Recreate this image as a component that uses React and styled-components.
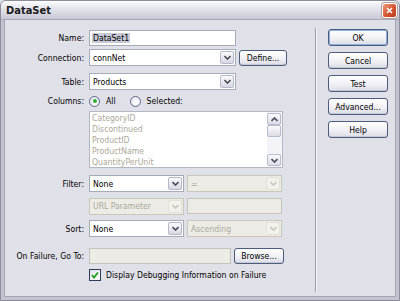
import React from 'react';
import styled, { createGlobalStyle, css } from 'styled-components';

const GlobalStyle = createGlobalStyle`
    html, body {
        margin: 0;
        padding: 0;
        background: #e0e0e8;
    }
    body {
        font-family: "DejaVu Sans Condensed", "Liberation Sans", sans-serif;
        font-size: 8.6px;
        color: #000;
    }
`;

const Window = styled.div`
    width: 400px;
    height: 301px;
    box-sizing: border-box;
    display: flex;
    flex-direction: column;
    background: #c4c4d0;
    border: 1px solid #8c8c9c;
    border-radius: 6px 6px 0 0;
    overflow: hidden;
`;

const TitleBar = styled.div`
    height: 18px;
    flex: none;
    display: flex;
    align-items: center;
    justify-content: space-between;
    padding: 0 2px 0 5px;
    background: linear-gradient(#ffffff, #ececf2 25%, #dcdce6 60%, #c8c8d4);
    border-bottom: 1px solid #a8a8b8;
`;

const Title = styled.span`
    font-family: "DejaVu Sans Condensed", "Liberation Sans", sans-serif;
    font-weight: bold;
    font-size: 11px;
    color: #1a1a1a;
`;

const CloseBox = styled.div`
    width: 13px;
    height: 13px;
    border-radius: 3px;
    border: 1px solid #fff;
    box-shadow: 0 0 0 1px #b0a0a0;
    background: linear-gradient(135deg, #f09a7c, #d4552f 55%, #b83a18);
    display: flex;
    align-items: center;
    justify-content: center;
`;

const Frame = styled.div`
    flex: 1;
    display: flex;
    padding: 0 3px 3px 3px;
`;

const Client = styled.div`
    flex: 1;
    display: flex;
    background: #e0e0e8;
    border: 1px solid #a4a4b4;
    border-top: none;
`;

const Form = styled.div`
    width: 310px;
    padding-top: 10px;
    display: flex;
    flex-direction: column;
`;

const Row = styled.div`
    display: flex;
    align-items: center;
    height: ${p => p.$h || 16}px;
    margin-top: ${p => p.$top || 0}px;
    ${p => p.$start && css`align-items: flex-start;`}
`;

const Label = styled.label`
    width: 79px;
    padding-right: 5px;
    text-align: right;
    white-space: nowrap;
    flex: none;
`;

const Controls = styled.div`
    display: flex;
    align-items: center;
    gap: 3px;
`;

const TextBox = styled.div`
    box-sizing: border-box;
    width: ${p => p.$w}px;
    height: 16px;
    display: flex;
    align-items: center;
    padding: 0 3px;
    background: ${p => (p.$disabled ? '#ecebe6' : '#fff')};
    border: 1px solid ${p => (p.$disabled ? '#c4c3ba' : '#a4acb8')};
    color: ${p => (p.$disabled ? '#aca899' : '#000')};
`;

const Selected = styled.span`
    background: #c8cad8;
    padding: 0 1px;
    margin-left: -1px;
`;

const Combo = styled.div`
    box-sizing: border-box;
    width: ${p => p.$w}px;
    height: 17px;
    display: flex;
    align-items: center;
    padding: 1px;
    background: ${p => (p.$disabled ? '#ecebe6' : '#fff')};
    border: 1px solid ${p => (p.$disabled ? '#c9c7ba' : '#a4acb8')};
    color: ${p => (p.$disabled ? '#aca899' : '#000')};
`;

const ComboText = styled.span`
    flex: 1;
    padding-left: 2px;
    overflow: hidden;
    white-space: nowrap;
`;

const ArrowBtn = styled.div`
    width: 14px;
    height: 13px;
    box-sizing: border-box;
    border-radius: 2px;
    display: flex;
    align-items: center;
    justify-content: center;
    ${p => p.$disabled
        ? css`
            background: #f2f1ec;
            border: 1px solid #e2e0d8;
        `
        : css`
            background: linear-gradient(#fafafc, #d8d8e4);
            border: 1px solid #b4b8c8;
        `}
`;

const Chevron = ({ up, color = '#4a4a5a' }) => (
    <svg width="7" height="5" viewBox="0 0 7 5">
        <path
            d={up ? 'M0.5 4 L3.5 1 L6.5 4' : 'M0.5 1 L3.5 4 L6.5 1'}
            fill="none"
            stroke={color}
            strokeWidth="1.6"
        />
    </svg>
);

const Select = ({ w, value, disabled }) => (
    <Combo $w={w} $disabled={disabled}>
        <ComboText>{value}</ComboText>
        <ArrowBtn $disabled={disabled}>
            <Chevron color={disabled ? '#c9c7ba' : '#4a4a5a'} />
        </ArrowBtn>
    </Combo>
);

const Button = styled.div`
    box-sizing: border-box;
    width: ${p => p.$w || 60}px;
    height: ${p => p.$h || 17}px;
    display: flex;
    align-items: center;
    justify-content: center;
    border: 1px solid #4c5c7c;
    border-radius: 3px;
    background: linear-gradient(#ffffff, #f2f2f6 50%, #dcdce6);
    box-shadow: ${p => (p.$default ? 'inset 0 0 0 1px #8cb0e0' : 'inset 0 -1px 0 #c8c8d4')};
    white-space: nowrap;
`;

const RadioGroup = styled.div`
    display: flex;
    align-items: center;
`;

const RadioCircle = styled.span`
    box-sizing: border-box;
    width: 11px;
    height: 11px;
    border-radius: 50%;
    border: 1px solid #5a6a8a;
    background: radial-gradient(circle at 60% 60%, #ffffff, #e0e0e8);
    display: inline-flex;
    align-items: center;
    justify-content: center;
    margin-right: 6px;
    &::after {
        content: '';
        width: 4px;
        height: 4px;
        border-radius: 50%;
        background: ${p => (p.$on ? '#30b030' : 'transparent')};
    }
`;

const RadioLabel = styled.span`
    margin-right: ${p => p.$gap || 0}px;
`;

const ListBox = styled.div`
    box-sizing: border-box;
    width: 194px;
    height: 57px;
    display: flex;
    background: #fff;
    border: 1px solid #b4b8c0;
`;

const ListItems = styled.div`
    flex: 1;
    padding: 1px 2px;
    color: #aca899;
    line-height: 11px;
`;

const ScrollBar = styled.div`
    width: 14px;
    display: flex;
    flex-direction: column;
    background: #f4f4f8;
    padding: 1px 1px 1px 0;
`;

const ScrollBtn = styled.div`
    height: 12px;
    box-sizing: border-box;
    border: 1px solid #b8bccc;
    border-radius: 2px;
    background: linear-gradient(#fbfbfd, #dcdce6);
    display: flex;
    align-items: center;
    justify-content: center;
`;

const Thumb = styled(ScrollBtn)`
    height: 12px;
`;

const Track = styled.div`
    flex: 1;
`;

const CheckBox = styled.span`
    box-sizing: border-box;
    width: 12px;
    height: 12px;
    border: 1px solid #2c3c5c;
    background: linear-gradient(135deg, #e0e0e8, #ffffff);
    display: inline-flex;
    align-items: center;
    justify-content: center;
    margin-right: 5px;
`;

const Divider = styled.div`
    width: 1px;
    margin: 8px 0 4px;
    background: #9c9cac;
    border-right: 1px solid #f4f4f8;
`;

const ButtonColumn = styled.div`
    padding: 9px 0 0 11px;
    display: flex;
    flex-direction: column;
    gap: 6px;
`;

const columns = ['CategoryID', 'Discontinued', 'ProductID', 'ProductName', 'QuantityPerUnit'];

const App = () => {
    return (
        <>
            <GlobalStyle />
            <Window>
                <TitleBar>
                    <Title>DataSet</Title>
                    <CloseBox>
                        <svg width="7" height="7" viewBox="0 0 7 7">
                            <path d="M1 1 L6 6 M6 1 L1 6" stroke="#fff" strokeWidth="1.6" />
                        </svg>
                    </CloseBox>
                </TitleBar>
                <Frame>
                    <Client>
                        <Form>
                            <Row $h={16}>
                                <Label>Name:</Label>
                                <TextBox $w={147}><Selected>DataSet1</Selected></TextBox>
                            </Row>
                            <Row $h={17} $top={3}>
                                <Label>Connection:</Label>
                                <Controls>
                                    <Select w={147} value="connNet" />
                                    <Button $w={48} $h={16}>Define...</Button>
                                </Controls>
                            </Row>
                            <Row $h={17} $top={7}>
                                <Label>Table:</Label>
                                <Select w={147} value="Products" />
                            </Row>
                            <Row $h={12} $top={5}>
                                <Label>Columns:</Label>
                                <RadioGroup>
                                    <RadioCircle $on />
                                    <RadioLabel $gap={14}>All</RadioLabel>
                                    <RadioCircle />
                                    <RadioLabel>Selected:</RadioLabel>
                                </RadioGroup>
                            </Row>
                            <Row $h={57} $top={4} $start>
                                <Label />
                                <ListBox>
                                    <ListItems>
                                        {columns.map(c => <div key={c}>{c}</div>)}
                                    </ListItems>
                                    <ScrollBar>
                                        <ScrollBtn><Chevron up /></ScrollBtn>
                                        <Thumb />
                                        <Track />
                                        <ScrollBtn><Chevron /></ScrollBtn>
                                    </ScrollBar>
                                </ListBox>
                            </Row>
                            <Row $h={17} $top={7}>
                                <Label>Filter:</Label>
                                <Controls>
                                    <Select w={95} value="None" />
                                    <Select w={95} value="=" disabled />
                                </Controls>
                            </Row>
                            <Row $h={16} $top={6}>
                                <Label />
                                <Controls>
                                    <Select w={95} value="URL Parameter" disabled />
                                    <TextBox $w={95} $disabled />
                                </Controls>
                            </Row>
                            <Row $h={17} $top={6}>
                                <Label>Sort:</Label>
                                <Controls>
                                    <Select w={95} value="None" />
                                    <Select w={95} value="Ascending" disabled />
                                </Controls>
                            </Row>
                            <Row $h={17} $top={10}>
                                <Label>On Failure, Go To:</Label>
                                <Controls>
                                    <TextBox $w={142} $disabled />
                                    <Button $w={50} $h={16}>Browse...</Button>
                                </Controls>
                            </Row>
                            <Row $h={13} $top={4}>
                                <Label />
                                <CheckBox>
                                    <svg width="8" height="8" viewBox="0 0 8 8">
                                        <path d="M1 4 L3 6.5 L7 1.5" fill="none" stroke="#22a022" strokeWidth="1.8" />
                                    </svg>
                                </CheckBox>
                                <span>Display Debugging Information on Failure</span>
                            </Row>
                        </Form>
                        <Divider />
                        <ButtonColumn>
                            <Button $default>OK</Button>
                            <Button>Cancel</Button>
                            <Button>Test</Button>
                            <Button>Advanced...</Button>
                            <Button>Help</Button>
                        </ButtonColumn>
                    </Client>
                </Frame>
            </Window>
        </>
    );
};

export default App;
